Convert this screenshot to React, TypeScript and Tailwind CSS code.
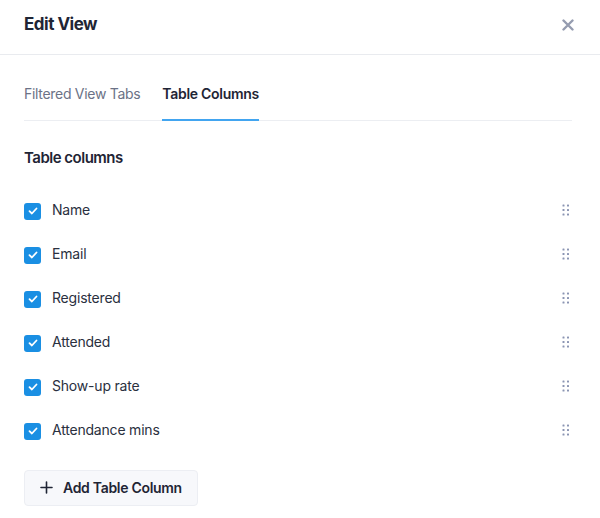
import { useState } from 'react'

const initialColumns = ['Name', 'Email', 'Registered', 'Attended', 'Show-up rate', 'Attendance mins']

function DragHandle() {
  return (
    <svg width="8" height="12" viewBox="0 0 8 12" className="text-[#8b95b3]" fill="currentColor">
      <rect x="0.5" y="0.5" width="2" height="2" rx="0.5" />
      <rect x="5" y="0.5" width="2" height="2" rx="0.5" />
      <rect x="0.5" y="5" width="2" height="2" rx="0.5" />
      <rect x="5" y="5" width="2" height="2" rx="0.5" />
      <rect x="0.5" y="9.5" width="2" height="2" rx="0.5" />
      <rect x="5" y="9.5" width="2" height="2" rx="0.5" />
    </svg>
  )
}

function Checkbox({ checked, onChange }: { checked: boolean; onChange: () => void }) {
  return (
    <button
      onClick={onChange}
      className={`w-[17px] h-[17px] rounded-[3px] flex items-center justify-center shrink-0 ${
        checked ? 'bg-[#1a8fe3]' : 'border border-[#c5cbd8] bg-white'
      }`}
    >
      {checked && (
        <svg width="10" height="8" viewBox="0 0 10 8" fill="none" stroke="white" strokeWidth={1.8}>
          <path strokeLinecap="round" strokeLinejoin="round" d="M1.5 4.2l2.4 2.3L8.5 1.5" />
        </svg>
      )}
    </button>
  )
}

export default function App() {
  const [activeTab, setActiveTab] = useState<'filtered' | 'columns'>('columns')
  const [checked, setChecked] = useState<boolean[]>(initialColumns.map(() => true))

  return (
    <div className="w-[600px] h-[518px] bg-white overflow-hidden font-['Inter',sans-serif] text-[#1f2535]">
      {/* Header */}
      <header className="h-[55px] flex items-center justify-between pl-[24px] pr-[26px] pb-[4px] border-b border-[#e9ebef]">
        <h1 className="text-[17px] font-bold tracking-[-0.5px]">Edit View</h1>
        <button className="text-[#959cb0]" title="Close">
          <svg width="12" height="12" viewBox="0 0 12 12" stroke="currentColor" strokeWidth={2.4} strokeLinecap="round">
            <path d="M1.5 1.5l9 9M10.5 1.5l-9 9" />
          </svg>
        </button>
      </header>

      <div className="px-[24px] pr-[28px]">
        {/* Tabs */}
        <div className="flex gap-[22px] border-b border-[#eceef2] mt-[28px]">
          <button
            onClick={() => setActiveTab('filtered')}
            className={`pb-[15px] text-[14px] tracking-[-0.3px] -mb-px border-b-2 ${
              activeTab === 'filtered' ? 'border-[#42a5f0] font-semibold text-[#1f2535]' : 'border-transparent text-[#6b7286]'
            }`}
          >
            Filtered View Tabs
          </button>
          <button
            onClick={() => setActiveTab('columns')}
            className={`pb-[15px] text-[14px] tracking-[-0.3px] -mb-px border-b-2 ${
              activeTab === 'columns' ? 'border-[#42a5f0] font-semibold text-[#1f2535]' : 'border-transparent text-[#6b7286]'
            }`}
          >
            Table Columns
          </button>
        </div>

        <h2 className="mt-[26px] text-[15px] font-semibold tracking-[-0.5px]">Table columns</h2>

        <ul className="mt-[31px] flex flex-col gap-[26px]">
          {initialColumns.map((col, i) => (
            <li key={col} className="flex items-center justify-between h-[18px]">
              <div className="flex items-center gap-[11px]">
                <div className="pt-[3px]">
                  <Checkbox
                    checked={checked[i]}
                    onChange={() => setChecked(c => c.map((v, j) => (j === i ? !v : v)))}
                  />
                </div>
                <span className="text-[14px] text-[#2a3040] tracking-[-0.2px]">{col}</span>
              </div>
              <div className="pr-[2px]">
                <DragHandle />
              </div>
            </li>
          ))}
        </ul>

        <button className="mt-[31px] h-[36px] w-[174px] flex items-center gap-[10px] pl-[15px] rounded-[4px] border border-[#eceef3] bg-[#f7f8fb] text-[14px] font-semibold text-[#1f2535] tracking-[-0.3px]">
          <svg width="13" height="13" viewBox="0 0 13 13" stroke="currentColor" strokeWidth={1.6} strokeLinecap="round">
            <path d="M6.5 1v11M1 6.5h11" />
          </svg>
          Add Table Column
        </button>
      </div>
    </div>
  )
}
